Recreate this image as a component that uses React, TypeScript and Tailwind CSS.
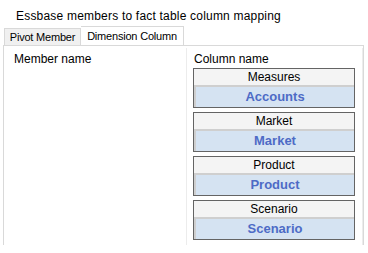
import React from "react";

const mappings = [
  { dim: "Measures", col: "Accounts" },
  { dim: "Market", col: "Market" },
  { dim: "Product", col: "Product" },
  { dim: "Scenario", col: "Scenario" },
];

export default function App() {
  return (
    <div className="w-[368px] h-[253px] bg-white overflow-hidden text-black text-[12px] leading-[14px] font-['Liberation_Sans',Arial,sans-serif]">
      <p className="pl-[16px] pt-[9px] h-[26px] tracking-[0.2px]">Essbase members to fact table column mapping</p>
      {/* tabs */}
      <div className="flex items-end pl-[4px] h-[19px]">
        <div className="w-[77px] h-[17px] bg-[#f0f0f0] border border-b-0 border-[#d9d9d9] flex items-center justify-center whitespace-nowrap text-[11px] tracking-[-0.2px]">
          Pivot Member
        </div>
        <div className="w-[103px] h-[19px] bg-white border border-b-0 border-l-0 border-[#d9d9d9] flex items-center justify-center whitespace-nowrap text-[11px] tracking-[-0.2px]">
          Dimension Column
        </div>
      </div>
      {/* tab page */}
      <div className="ml-[3px] w-[361px] h-[200px] border-t border-x border-[#d9d9d9] flex">
        <div className="w-[182px] pl-[10px] pt-[6px]">Member name</div>
        <div className="flex-1 mt-[2px] border-l border-r border-[#ececec] pl-[6px] pr-[6px] pt-[4px]">
          <p className="pl-[1px] h-[16px]">Column name</p>
          <div className="flex flex-col gap-[4px]">
            {mappings.map((m) => (
              <div key={m.dim} className="w-[162px] h-[40px] border border-[#646464] bg-[#cfcfcf] flex flex-col">
                <div className="h-[16px] bg-[#f4f4f4] text-center leading-[16px]">{m.dim}</div>
                <div className="flex-1 mt-[2px] ml-[2px] bg-[#d5e3f2] text-center font-bold text-[13px] leading-[20px] text-[#4d6bc6]">
                  {m.col}
                </div>
              </div>
            ))}
          </div>
        </div>
      </div>
    </div>
  );
}
